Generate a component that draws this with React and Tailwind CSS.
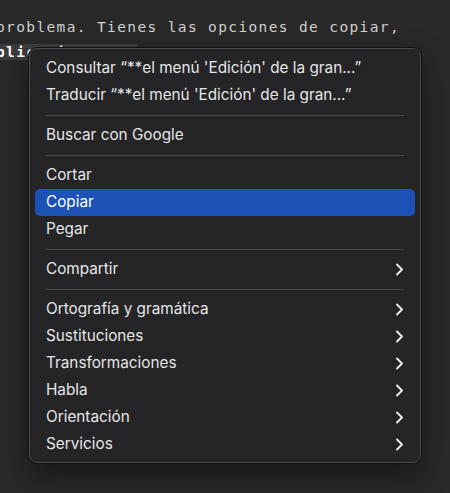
import React from "react";

const groups = [
  [
    { label: "Consultar “**el menú 'Edición' de la gran...”" },
    { label: "Traducir “**el menú 'Edición' de la gran...”" },
  ],
  [{ label: "Buscar con Google" }],
  [{ label: "Cortar" }, { label: "Copiar", active: true }, { label: "Pegar" }],
  [{ label: "Compartir", sub: true }],
  [
    { label: "Ortografía y gramática", sub: true },
    { label: "Sustituciones", sub: true },
    { label: "Transformaciones", sub: true },
    { label: "Habla", sub: true },
    { label: "Orientación", sub: true },
    { label: "Servicios", sub: true },
  ],
];

const Chevron = () => (
  <svg width="9" height="13" viewBox="0 0 9 13" fill="none">
    <path
      d="M2 1.5 L7 6.5 L2 11.5"
      stroke="#ececec"
      strokeWidth="1.9"
      strokeLinecap="round"
      strokeLinejoin="round"
    />
  </svg>
);

const MenuItem = ({ item }) => (
  <div
    className={`flex h-[27px] items-center justify-between rounded-[5px] pl-[11px] pr-[11px] ${
      item.active ? "bg-[#1c51b6] text-white" : "text-[#e6e6e6]"
    }`}
  >
    <span>{item.label}</span>
    {item.sub && <Chevron />}
  </div>
);

const App = () => {
  return (
    <div className="relative h-[493px] w-[450px] overflow-hidden bg-[#292929]">
      <div
        className="pt-[15px] text-[14.5px] leading-[24.5px] tracking-[1.37px] text-[#d0d0d0] whitespace-pre"
        style={{ fontFamily: "'DejaVu Sans Mono', monospace" }}
      >
        <div className="-ml-[4px]">problema. Tienes las opciones de copiar,</div>
        <div className="-ml-[4px]">
          <span className="bg-[#3c3c3c] font-bold text-white">plicaciones**:</span>
        </div>
      </div>

      <div
        className="absolute left-[29px] top-[48px] w-[392px] rounded-[8px] border border-[#4c4c4e] bg-[#252527] px-[5px] pb-[4px] pt-[6px] text-[15.3px] shadow-[0_0_0_1px_#111,0_12px_30px_rgba(0,0,0,0.45)]"
        style={{ fontFamily: "Inter, 'Liberation Sans', sans-serif" }}
      >
        {groups.map((group, gi) => (
          <div key={gi}>
            {gi > 0 && (
              <div className="flex h-[13px] items-center px-[11px]">
                <div className="h-px w-full bg-[#48484a]" />
              </div>
            )}
            {group.map((item) => (
              <MenuItem key={item.label} item={item} />
            ))}
          </div>
        ))}
      </div>
    </div>
  );
};

export default App;
